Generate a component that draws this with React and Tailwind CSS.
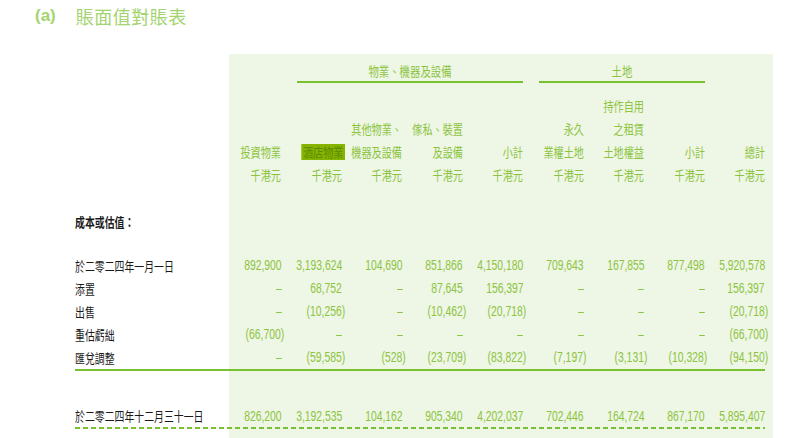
import React from "react";

const GREEN = "text-[#8cc43f]";
const GRID = "grid grid-cols-[154px_repeat(9,minmax(0,1fr))]";

const headerRows = [
  ["", "", "", "", "", "", "持作自用", "", ""],
  ["", "", "其他物業、", "傢私、裝置", "", "永久", "之租賃", "", ""],
  ["投資物業", "酒店物業", "機器及設備", "及設備", "小計", "業權土地", "土地權益", "小計", "總計"],
  ["千港元", "千港元", "千港元", "千港元", "千港元", "千港元", "千港元", "千港元", "千港元"],
];

const rows = [
  ["於二零二四年一月一日", ["892,900", "3,193,624", "104,690", "851,866", "4,150,180", "709,643", "167,855", "877,498", "5,920,578"]],
  ["添置", ["–", "68,752", "–", "87,645", "156,397", "–", "–", "–", "156,397"]],
  ["出售", ["–", "(10,256)", "–", "(10,462)", "(20,718)", "–", "–", "–", "(20,718)"]],
  ["重估虧絀", ["(66,700)", "–", "–", "–", "–", "–", "–", "–", "(66,700)"]],
  ["匯兌調整", ["–", "(59,585)", "(528)", "(23,709)", "(83,822)", "(7,197)", "(3,131)", "(10,328)", "(94,150)"]],
];

const closing = ["於二零二四年十二月三十一日", ["826,200", "3,192,535", "104,162", "905,340", "4,202,037", "702,446", "164,724", "867,170", "5,895,407"]];

const cjk = { fontFamily: '"Noto Sans CJK TC", "Noto Sans", sans-serif' };
const num = { fontFamily: '"Liberation Sans", Arial, sans-serif' };

function Label({ children, bold }) {
  return (
    <div className="h-full flex items-center whitespace-nowrap">
      <span
        style={cjk}
        className={`inline-block origin-left scale-x-[0.76] text-[13px] text-[#1a1a1a] ${bold ? "font-bold" : ""}`}
      >
        {children}
      </span>
    </div>
  );
}

function Value({ v }) {
  const neg = v.startsWith("(");
  return (
    <div className="h-full flex items-center justify-end pr-2 whitespace-nowrap">
      <span
        style={num}
        className={`inline-block origin-right scale-x-[0.74] text-[14px] ${GREEN} ${neg ? "-mr-[3px]" : ""}`}
      >
        {v}
      </span>
    </div>
  );
}

function DataRow({ label, values, h = "h-[23px]" }) {
  return (
    <div className={`${GRID} ${h}`}>
      <Label>{label}</Label>
      {values.map((v, i) => (
        <Value key={i} v={v} />
      ))}
    </div>
  );
}

export default function App() {
  return (
    <div className="w-[800px] h-[438px] overflow-hidden bg-white">
      {/* title */}
      <div className="h-[54px] flex items-start pt-[5px] pl-[35px] gap-[20px]">
        <span style={num} className="text-[17px] font-bold text-[#a3d46f] leading-[22px]">(a)</span>
        <span style={cjk} className="text-[18px] text-[#a3d46f] leading-[22px] tracking-[0.5px]">賬面值對賬表</span>
      </div>

      <div className="ml-[75px] w-[698px] pb-[9px] bg-[linear-gradient(to_right,transparent_154px,#eef6e5_154px)]">
        {/* group headers */}
        <div className={`${GRID} pt-[6px]`}>
          <div className="col-start-3 col-span-4 h-[21px] flex items-center justify-center">
            <span style={cjk} className={`inline-block scale-x-[0.8] text-[13px] ${GREEN}`}>物業、機器及設備</span>
          </div>
          <div className="col-start-7 col-span-3 h-[21px] flex items-center justify-center">
            <span style={cjk} className={`inline-block scale-x-[0.8] text-[13px] ${GREEN}`}>土地</span>
          </div>
          <div className="col-start-3 col-span-4 px-2">
            <div className="h-[2px] bg-[#7ac130]" />
          </div>
          <div className="col-start-7 col-span-3 px-2">
            <div className="h-[2px] bg-[#7ac130]" />
          </div>
        </div>

        {/* column headers */}
        <div className="pt-[11px]">
          {headerRows.map((r, ri) => (
            <div key={ri} className={`${GRID} h-[23px]`}>
              <div />
              {r.map((t, i) => (
                <div key={i} className="h-full flex items-center justify-end pr-2 whitespace-nowrap">
                  {t && (
                    <span
                      style={cjk}
                      className={`inline-block origin-right scale-x-[0.78] text-[13px] leading-[16px] ${
                        ri === 2 && i === 1 ? "bg-[#86b400] text-[#5b8c00] px-[2px] -mr-[3px]" : GREEN
                      }`}
                    >
                      {t}
                    </span>
                  )}
                </div>
              ))}
            </div>
          ))}
        </div>

        {/* section heading */}
        <div className={`${GRID} h-[23px] mt-[24px]`}>
          <Label bold>成本或估值：</Label>
        </div>

        <div className="mt-[21px]">
          {rows.map(([label, values]) => (
            <DataRow key={label} label={label} values={values} />
          ))}
        </div>

        <div className="mr-2 h-[2px] bg-[#7ac130]" />

        <div className="mt-[34px]">
          <DataRow label={closing[0]} values={closing[1]} h="h-[22px]" />
        </div>

        <div className="mr-2 h-[2px] bg-[repeating-linear-gradient(to_right,#7ac130_0_5px,transparent_5px_8px)]" />
      </div>
    </div>
  );
}
